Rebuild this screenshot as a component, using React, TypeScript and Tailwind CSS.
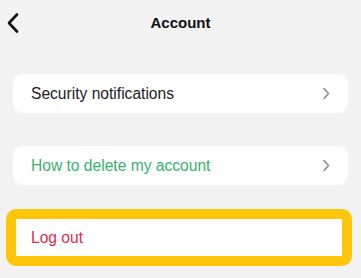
const font = { fontFamily: '"Liberation Sans", Arial, sans-serif' }

const Chevron = () => (
  <svg width="8" height="13" viewBox="0 0 8 13" fill="none" className="text-[#8e8e93]">
    <path d="M2 1.5 L6.5 6.5 L2 11.5" stroke="currentColor" strokeWidth="1.6" strokeLinecap="round" strokeLinejoin="round" />
  </svg>
)

const Row = ({ label, className }: { label: string; className: string }) => (
  <div className="flex h-[39px] items-center justify-between rounded-[9px] bg-white pl-[18px] pr-[18px]">
    <span className={`text-[15.6px] ${className}`}>{label}</span>
    <Chevron />
  </div>
)

export default function App() {
  return (
    <div className="h-[278px] w-[361px] overflow-hidden bg-[#f2f2f2]" style={font}>
      <div className="relative flex h-[46px] items-center justify-center">
        {/* back */}
        <svg className="absolute left-[6px] top-[12px]" width="14" height="22" viewBox="0 0 14 22" fill="none">
          <path d="M11 2.5 L3 11 L11 19.5" stroke="#111" strokeWidth="2.6" strokeLinecap="round" strokeLinejoin="round" />
        </svg>
        <span className="text-[15px] font-bold text-[#111]">Account</span>
      </div>
      <div className="flex flex-col px-[13px] pt-[28px]">
        <Row label="Security notifications" className="text-[#1c1c1e]" />
        <div className="h-[33px]" />
        <Row label="How to delete my account" className="text-[#35b36d]" />
        <div className="ml-[-7px] mt-[24px] w-[346px] rounded-[10px] border-[10px] border-[#fec60b]">
          <div className="flex h-[37px] items-center bg-white pl-[15px]">
            <span className="text-[15.6px] text-[#e8294a]">Log out</span>
          </div>
        </div>
      </div>
    </div>
  )
}
